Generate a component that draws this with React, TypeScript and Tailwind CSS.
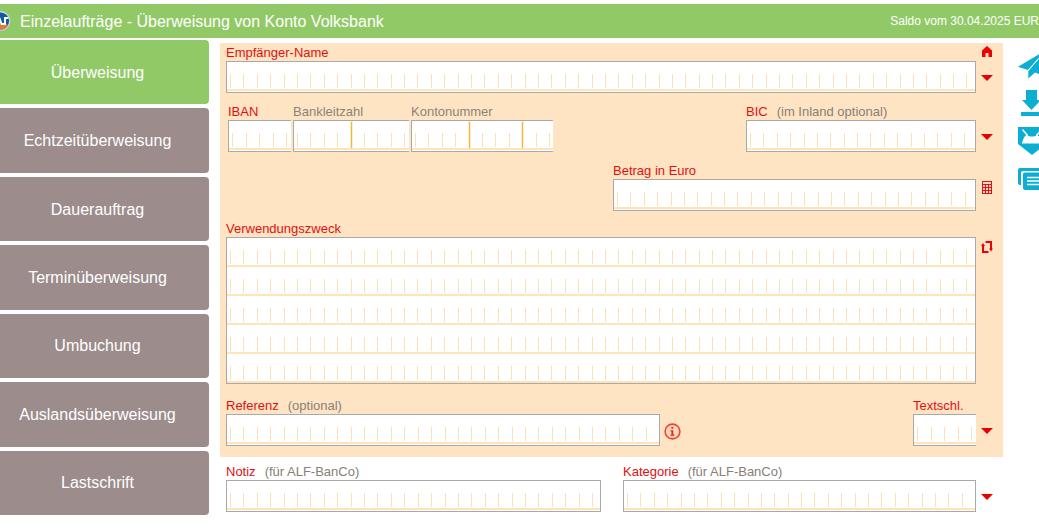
import { useId, type ReactNode } from "react";

const orders = [
  "Überweisung",
  "Echtzeitüberweisung",
  "Dauerauftrag",
  "Terminüberweisung",
  "Umbuchung",
  "Auslandsüberweisung",
  "Lastschrift",
];

type TicksProps = {
  cells: number;
  inset: string;
  marks?: number[];
};

// comb lines of a paper form, spread evenly between the insets
function Ticks({ cells, inset, marks = [] }: TicksProps) {
  return (
    <div
      aria-hidden
      className={`flex h-full items-end justify-between border-b-2 border-[#ffe4b8] pl-[3px] ${inset}`}
    >
      {Array.from({ length: cells }, (_, i) =>
        marks.includes(i) ? (
          <span key={i} className="h-[26px] w-px bg-[#efb83c] outline outline-[#f8dca0]/50" />
        ) : (
          <span key={i} className="mb-px h-[14px] w-px bg-[#f9e0b5]" />
        ),
      )}
    </div>
  );
}

type FieldProps = TicksProps & {
  label: string;
  hint?: string;
  muted?: boolean;
  open?: boolean;
  lines?: number;
  className?: string;
};

function Field({
  label,
  hint,
  muted,
  open,
  lines = 1,
  className = "",
  ...ticks
}: FieldProps) {
  const id = useId();
  return (
    <div className={className}>
      <label
        htmlFor={id}
        className={`block h-[18px] whitespace-nowrap text-[13px] leading-5 ${muted ? "text-[#8b8378]" : "text-[#e01010]"}`}
      >
        {label}
        {hint && <span className="ml-[9px] text-[#868078]">{hint}</span>}
      </label>
      <div
        className={`relative border border-[#a9a9a9] bg-white ${open ? "border-r-0" : ""}`}
      >
        {lines > 1 ? (
          <>
            {Array.from({ length: lines }, (_, i) => (
              <div key={i} className="h-[29px]">
                <Ticks {...ticks} />
              </div>
            ))}
            <textarea
              id={id}
              className="absolute inset-0 resize-none overflow-hidden bg-transparent px-1 text-sm leading-[29px] outline-none"
            />
          </>
        ) : (
          <>
            <div className="h-[30px] pb-px">
              <Ticks {...ticks} />
            </div>
            <input
              id={id}
              type="text"
              className="absolute inset-0 w-full bg-transparent px-1 text-sm outline-none"
            />
          </>
        )}
      </div>
    </div>
  );
}

function Side({ children, className = "" }: { children?: ReactNode; className?: string }) {
  return (
    <div className={`flex w-[27px] shrink-0 flex-col items-center pr-[5px] ${className}`}>
      {children}
    </div>
  );
}

function DropButton({ label }: { label: string }) {
  return (
    <button type="button" aria-label={label} className="block">
      <svg width="12" height="6" viewBox="0 0 12 6" fill="#e60000">
        <path d="M0 0h12L6 6z" />
      </svg>
    </button>
  );
}

function BankLogo() {
  return (
    <svg width="11" height="20" viewBox="0 0 11 20" className="shrink-0">
      <circle cx="0.500" cy="10" r="10" fill="#c3d3de" />
      <circle cx="0.500" cy="10" r="8.600" fill="#0f5aa0" />
      <path d="M-8 13.500H8.400A8.600 8.600 0 0 1 .5 18.600z" fill="#e8763a" />
      <path d="M-1 6l2.500 7H5V7h3.500" fill="none" stroke="#fff" strokeWidth="2" />
    </svg>
  );
}

export default function App() {
  return (
    <div className="overflow-hidden bg-white pt-1 font-['Liberation_Sans',Arial,sans-serif]">
      <header className="flex h-[34px] items-center overflow-hidden bg-[#92c967] text-white">
        <BankLogo />
        <h1 className="ml-[9px] whitespace-nowrap pt-px text-base">
          Einzelaufträge - Überweisung von Konto Volksbank
        </h1>
        <p className="ml-auto whitespace-nowrap text-xs">Saldo vom 30.04.2025 EUR</p>
      </header>

      <div className="flex pt-0.5">
        <nav className="grid w-[209px] shrink-0 auto-rows-fr gap-1">
          {orders.map((name, i) => (
            <button
              key={name}
              type="button"
              className={`rounded-r-[4px] pr-3.5 pt-px text-base text-white ${i === 0 ? "bg-[#92c967]" : "bg-[#9c8c8c]"}`}
            >
              {name}
            </button>
          ))}
        </nav>

        <form className="ml-[11px] min-w-0 flex-1 pb-[3px] pt-[3px]">
          <div className="bg-[#ffe4c4] pb-[11px] pl-1.5">
            <div className="flex">
              <Field label="Empfänger-Name" cells={56} inset="pr-[7px]" className="flex-1" />
              <Side className="gap-[18px] pt-[3px]">
                <button type="button" aria-label="Auftraggeber" className="block">
                  <svg width="12" height="11" viewBox="0 0 12 11" fill="#f00000">
                    <path d="M6 0l5 4.500V11H7.500V7h-3v4H1V4.500z" />
                  </svg>
                </button>
                <DropButton label="Empfänger wählen" />
              </Side>
            </div>

            <div className="mt-[9px] flex">
              <div className="flex gap-0.5 pl-0.5">
                <Field label="IBAN" open cells={5} inset="pr-1" className="w-[63px]" />
                <Field label="Bankleitzahl" muted open cells={9} marks={[4]} inset="pr-1" className="w-[116px]" />
                <Field label="Kontonummer" muted open cells={11} marks={[4, 8]} inset="pr-[3px]" className="w-[142px]" />
              </div>
              <Field label="BIC" hint="(im Inland optional)" cells={17} inset="pr-[10px]" className="ml-auto w-[230px]" />
              <Side className="pt-8">
                <DropButton label="BIC wählen" />
              </Side>
            </div>

            <div className="mt-[9px] flex justify-end">
              <Field label="Betrag in Euro" cells={27} inset="pr-[9px]" className="w-[363px]" />
              <Side className="pt-5">
                <button type="button" aria-label="Rechner" className="block">
                  <svg width="10" height="13" viewBox="0 0 10 13">
                    <rect width="10" height="13" fill="#dc1414" />
                    <path
                      d="M1 1h8v2H1zM1 4h2v2H1zM4 4h2v2H4zM7 4h2v2H7zM1 7h2v2H1zM4 7h2v2H4zM7 7h2v2H7zM1 10h2v2H1zM4 10h2v2H4zM7 10h2v2H7z"
                      fill="#ffd9c0"
                    />
                  </svg>
                </button>
              </Side>
            </div>

            <div className="mt-2 flex">
              <Field label="Verwendungszweck" lines={5} cells={56} inset="pr-[7px]" className="flex-1" />
              <Side className="pt-[22px]">
                <button type="button" aria-label="Zeilen tauschen" className="block">
                  <svg width="12" height="12" viewBox="0 0 12 12">
                    <path d="M4.500 1H10v7M7.500 11H2V4" fill="none" stroke="#f00000" strokeWidth="2" />
                    <path d="M0 5l2-3 2 3zM8 7.500h4l-2 3z" fill="#f00000" />
                  </svg>
                </button>
              </Side>
            </div>

            <div className="mt-3 flex">
              <Field label="Referenz" hint="(optional)" cells={32} inset="pr-[12px]" className="w-[434px]" />
              <button type="button" aria-label="Hinweis zur Referenz" className="ml-1 mt-[27px] self-start">
                <svg width="17" height="17" viewBox="0 0 17 17">
                  <circle cx="8.500" cy="8.500" r="7.400" fill="#ffd5bb" stroke="#ee4632" strokeWidth="1.600" />
                  <path d="M7.300 4h2v1.800h-2zM6.500 7.200h2.800v4.300h1v1.200H6.500v-1.200h.9V8.400h-.9z" fill="#e6281e" />
                </svg>
              </button>
              <Field label="Textschl." open cells={5} inset="pr-1" className="ml-auto w-[63px]" />
              <Side className="pt-8">
                <DropButton label="Textschlüssel wählen" />
              </Side>
            </div>
          </div>

          <div className="mt-[5px] flex pl-1.5">
            <Field label="Notiz" hint="(für ALF-BanCo)" cells={28} inset="pr-[7px]" className="w-[375px]" />
            <Field label="Kategorie" hint="(für ALF-BanCo)" cells={26} inset="pr-[12px]" className="ml-[22px] flex-1" />
            <Side className="pt-8">
              <DropButton label="Kategorie wählen" />
            </Side>
          </div>
        </form>

        <aside className="flex w-9 shrink-0 flex-col overflow-hidden pl-[15px] pt-[14px]">
          <button type="button" aria-label="Senden" className="w-7 shrink-0">
            <svg width="28" height="26" viewBox="0 0 28 26" fill="#0cafd2">
              <path d="M0 12.700L28-4 9.800 16z" />
              <path d="M10.300 24.500V17L28-4l-4 25-7-2.500z" />
              <path d="M9.800 16.800L24 1" stroke="#fff" strokeWidth="1" />
            </svg>
          </button>
          <button type="button" aria-label="Speichern" className="mt-[9px] w-7 shrink-0">
            <svg width="28" height="28" viewBox="0 0 28 28" fill="#0cafd2">
              <path d="M8 1h11v10h4l-9.500 10L4 11h4zM3 23h22v4H3z" />
            </svg>
          </button>
          <button type="button" aria-label="Postkorb" className="mt-[10px] w-7 shrink-0">
            <svg width="28" height="28" viewBox="0 0 28 28">
              <path d="M0 0h28v17L14 28 0 17z" fill="#0cafd2" />
              <path d="M4.500 2.500l5 6M23.500 2.500l-5 6" stroke="#fff" strokeWidth="1.500" />
              <path d="M4 16.500c1-5 3-8 5-8.500 3 2 7 2 10 0 2 .5 4 3.500 5 8.500z" fill="#fff" />
            </svg>
          </button>
          <button type="button" aria-label="Nachrichten" className="mt-[13px] w-7 shrink-0">
            <svg width="28" height="22" viewBox="0 0 28 22" fill="none">
              <path d="M0 2Q0 0 2 0h22v3H5Q3 3 3 5v12H2q-2 0-2-2z" fill="#0cafd2" />
              <rect x="5" y="4.500" width="25" height="17.500" rx="2" fill="#0cafd2" />
              <path d="M9 9.500h19M9 13h19M9 16.500h19" stroke="#fff" strokeWidth="1.500" />
            </svg>
          </button>
        </aside>
      </div>
    </div>
  );
}
